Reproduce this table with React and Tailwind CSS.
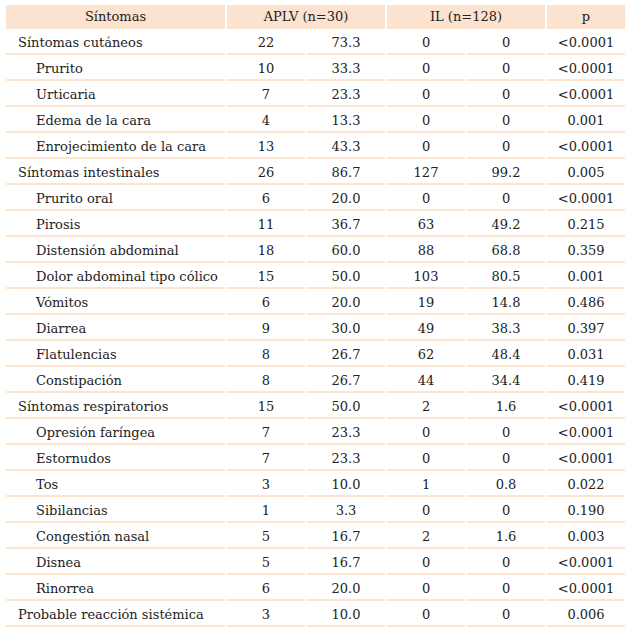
const rows = [
  ["Síntomas cutáneos", 0, "22", "73.3", "0", "0", "<0.0001"],
  ["Prurito", 1, "10", "33.3", "0", "0", "<0.0001"],
  ["Urticaria", 1, "7", "23.3", "0", "0", "<0.0001"],
  ["Edema de la cara", 1, "4", "13.3", "0", "0", "0.001"],
  ["Enrojecimiento de la cara", 1, "13", "43.3", "0", "0", "<0.0001"],
  ["Síntomas intestinales", 0, "26", "86.7", "127", "99.2", "0.005"],
  ["Prurito oral", 1, "6", "20.0", "0", "0", "<0.0001"],
  ["Pirosis", 1, "11", "36.7", "63", "49.2", "0.215"],
  ["Distensión abdominal", 1, "18", "60.0", "88", "68.8", "0.359"],
  ["Dolor abdominal tipo cólico", 1, "15", "50.0", "103", "80.5", "0.001"],
  ["Vómitos", 1, "6", "20.0", "19", "14.8", "0.486"],
  ["Diarrea", 1, "9", "30.0", "49", "38.3", "0.397"],
  ["Flatulencias", 1, "8", "26.7", "62", "48.4", "0.031"],
  ["Constipación", 1, "8", "26.7", "44", "34.4", "0.419"],
  ["Síntomas respiratorios", 0, "15", "50.0", "2", "1.6", "<0.0001"],
  ["Opresión faríngea", 1, "7", "23.3", "0", "0", "<0.0001"],
  ["Estornudos", 1, "7", "23.3", "0", "0", "<0.0001"],
  ["Tos", 1, "3", "10.0", "1", "0.8", "0.022"],
  ["Sibilancias", 1, "1", "3.3", "0", "0", "0.190"],
  ["Congestión nasal", 1, "5", "16.7", "2", "1.6", "0.003"],
  ["Disnea", 1, "5", "16.7", "0", "0", "<0.0001"],
  ["Rinorrea", 1, "6", "20.0", "0", "0", "<0.0001"],
  ["Probable reacción sistémica", 0, "3", "10.0", "0", "0", "0.006"],
];

export default function App() {
  return (
    <div className="bg-white w-[630px] h-[632px] pt-[3px] pl-[4px] font-['DejaVu_Serif',serif] text-[13px] leading-[18px] text-[#222]">
      <table className="table-fixed border-separate border-spacing-[2px] w-[623px]">
        <colgroup>
          <col className="w-[219px]" />
          <col className="w-[78px]" />
          <col className="w-[78px]" />
          <col className="w-[78px]" />
          <col className="w-[78px]" />
          <col className="w-[78px]" />
        </colgroup>
        <thead>
          <tr className="h-[24px]">
            <th className="bg-[#fbe3cf] font-normal p-0 pt-[3px] pb-[3px] text-center">Síntomas</th>
            <th colSpan={2} className="bg-[#fbe3cf] font-normal p-0 pt-[3px] pb-[3px] text-center">APLV (n=30)</th>
            <th colSpan={2} className="bg-[#fbe3cf] font-normal p-0 pt-[3px] pb-[3px] text-center">IL (n=128)</th>
            <th className="bg-[#fbe3cf] font-normal p-0 pt-[3px] pb-[3px] text-center">p</th>
          </tr>
        </thead>
        <tbody>
          {rows.map((r) => (
            <tr key={r[0]} className="h-[24px]">
              <td className={`p-0 pt-[3px] pb-[1px] border-b-2 border-[#fde4cf] ${r[1] ? "pl-[30px]" : "pl-[12px]"}`}>{r[0]}</td>
              {r.slice(2).map((v, i) => (
                <td key={i} className="p-0 pt-[3px] pb-[1px] text-center border-b-2 border-[#fde4cf]">{v}</td>
              ))}
            </tr>
          ))}
        </tbody>
      </table>
    </div>
  );
}
